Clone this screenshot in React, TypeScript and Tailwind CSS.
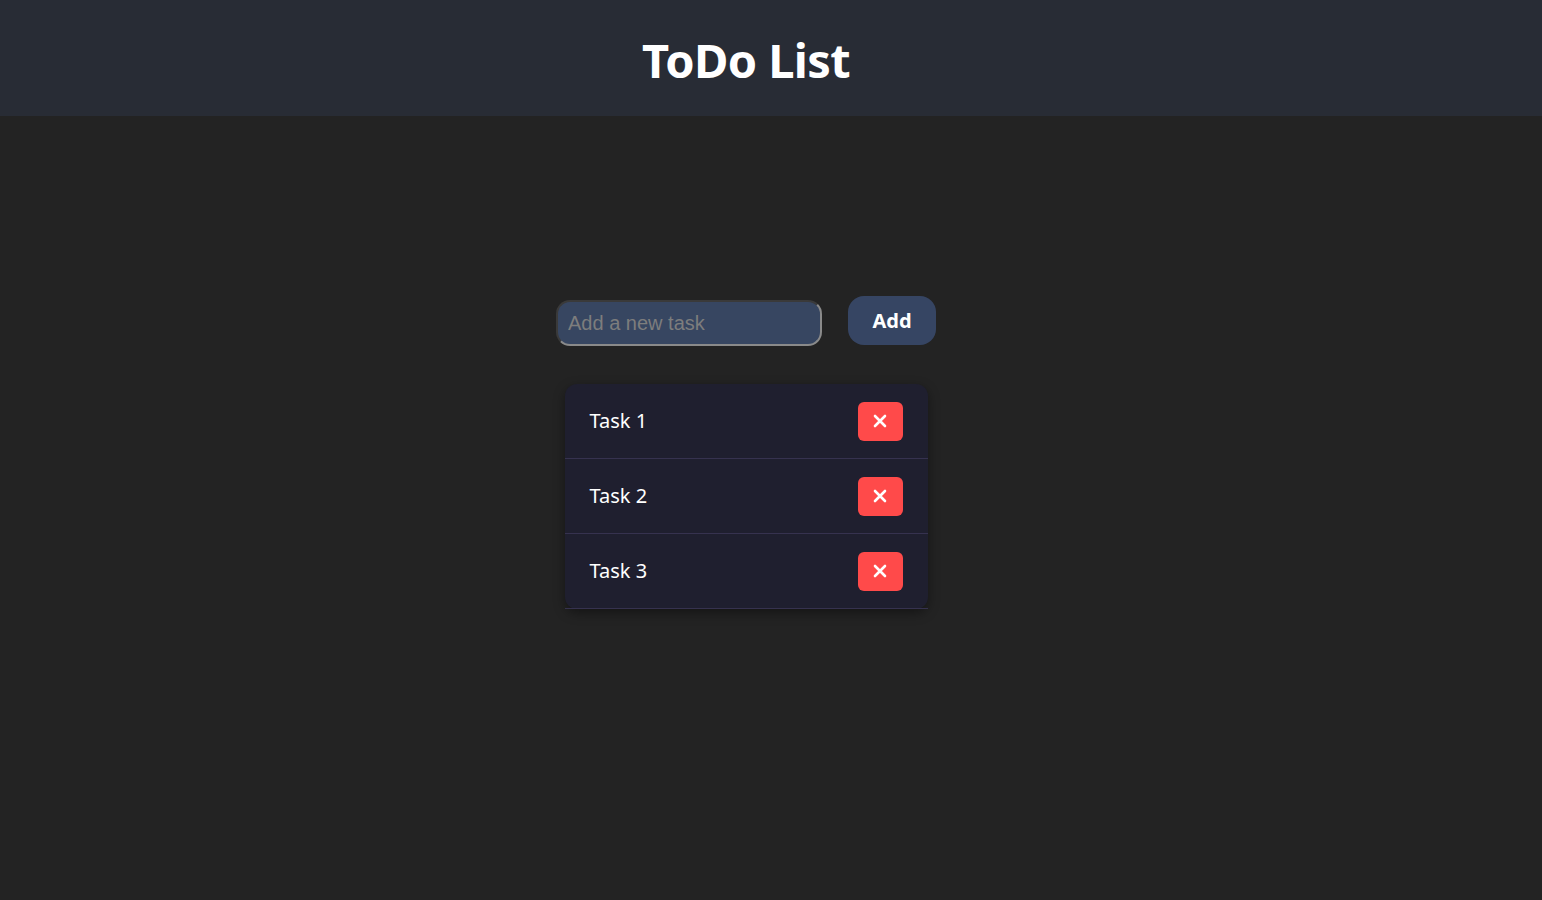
import { useState } from 'react';

export default function App() {
  const [tasks, setTasks] = useState(['Task 1', 'Task 2', 'Task 3']);
  const [text, setText] = useState('');

  const add = () => {
    if (!text.trim()) return;
    setTasks([...tasks, text.trim()]);
    setText('');
  };

  return (
    <div className="min-h-screen bg-[#232323] font-['Noto_Sans',sans-serif]">
      <header className="h-[116px] bg-[#282c35] flex items-center justify-center pr-[50px] pt-[4px]">
        <h1 className="text-[47px] font-bold text-white tracking-[-0.6px]">ToDo List</h1>
      </header>

      <main className="flex flex-col items-center pr-[50px] pt-[180px]">
        <div className="flex items-end gap-[26px]">
          <input
            value={text}
            onChange={(e) => setText(e.target.value)}
            placeholder="Add a new task"
            className="w-[266px] h-[46px] mb-[-1px] rounded-[14px] bg-[#374661] border-2 border-t-[#3a3a3a] border-l-[#3a3a3a] border-b-[#8a8a8a] border-r-[#8a8a8a] px-[10px] text-[20px] text-white placeholder:text-[#7d7d7d] font-['Liberation_Sans',sans-serif] outline-none"
          />
          <button
            onClick={add}
            className="w-[88px] h-[49px] rounded-[16px] bg-[#364563] text-white text-[20px] font-bold"
          >
            Add
          </button>
        </div>

        <ul className="mt-[39px] w-[363px] bg-[#1f1f2f] rounded-[12px] shadow-[0_4px_12px_rgba(0,0,0,0.4)]">
          {tasks.map((t, i) => (
            <li
              key={i}
              className="h-[75px] flex items-center justify-between pl-[24px] pr-[25px] border-b border-[#36324f]"
            >
              <span className="text-white text-[20px] ml-[1px]">{t}</span>
              <button
                onClick={() => setTasks(tasks.filter((_, j) => j !== i))}
                className="w-[45px] h-[39px] rounded-[6px] bg-[#ff4a4a] flex items-center justify-center"
              >
                <svg width="14" height="14" viewBox="0 0 14 14">
                  <path d="M2 2 L12 12 M12 2 L2 12" stroke="white" strokeWidth="2.6" strokeLinecap="round" />
                </svg>
              </button>
            </li>
          ))}
        </ul>
      </main>
    </div>
  );
}
